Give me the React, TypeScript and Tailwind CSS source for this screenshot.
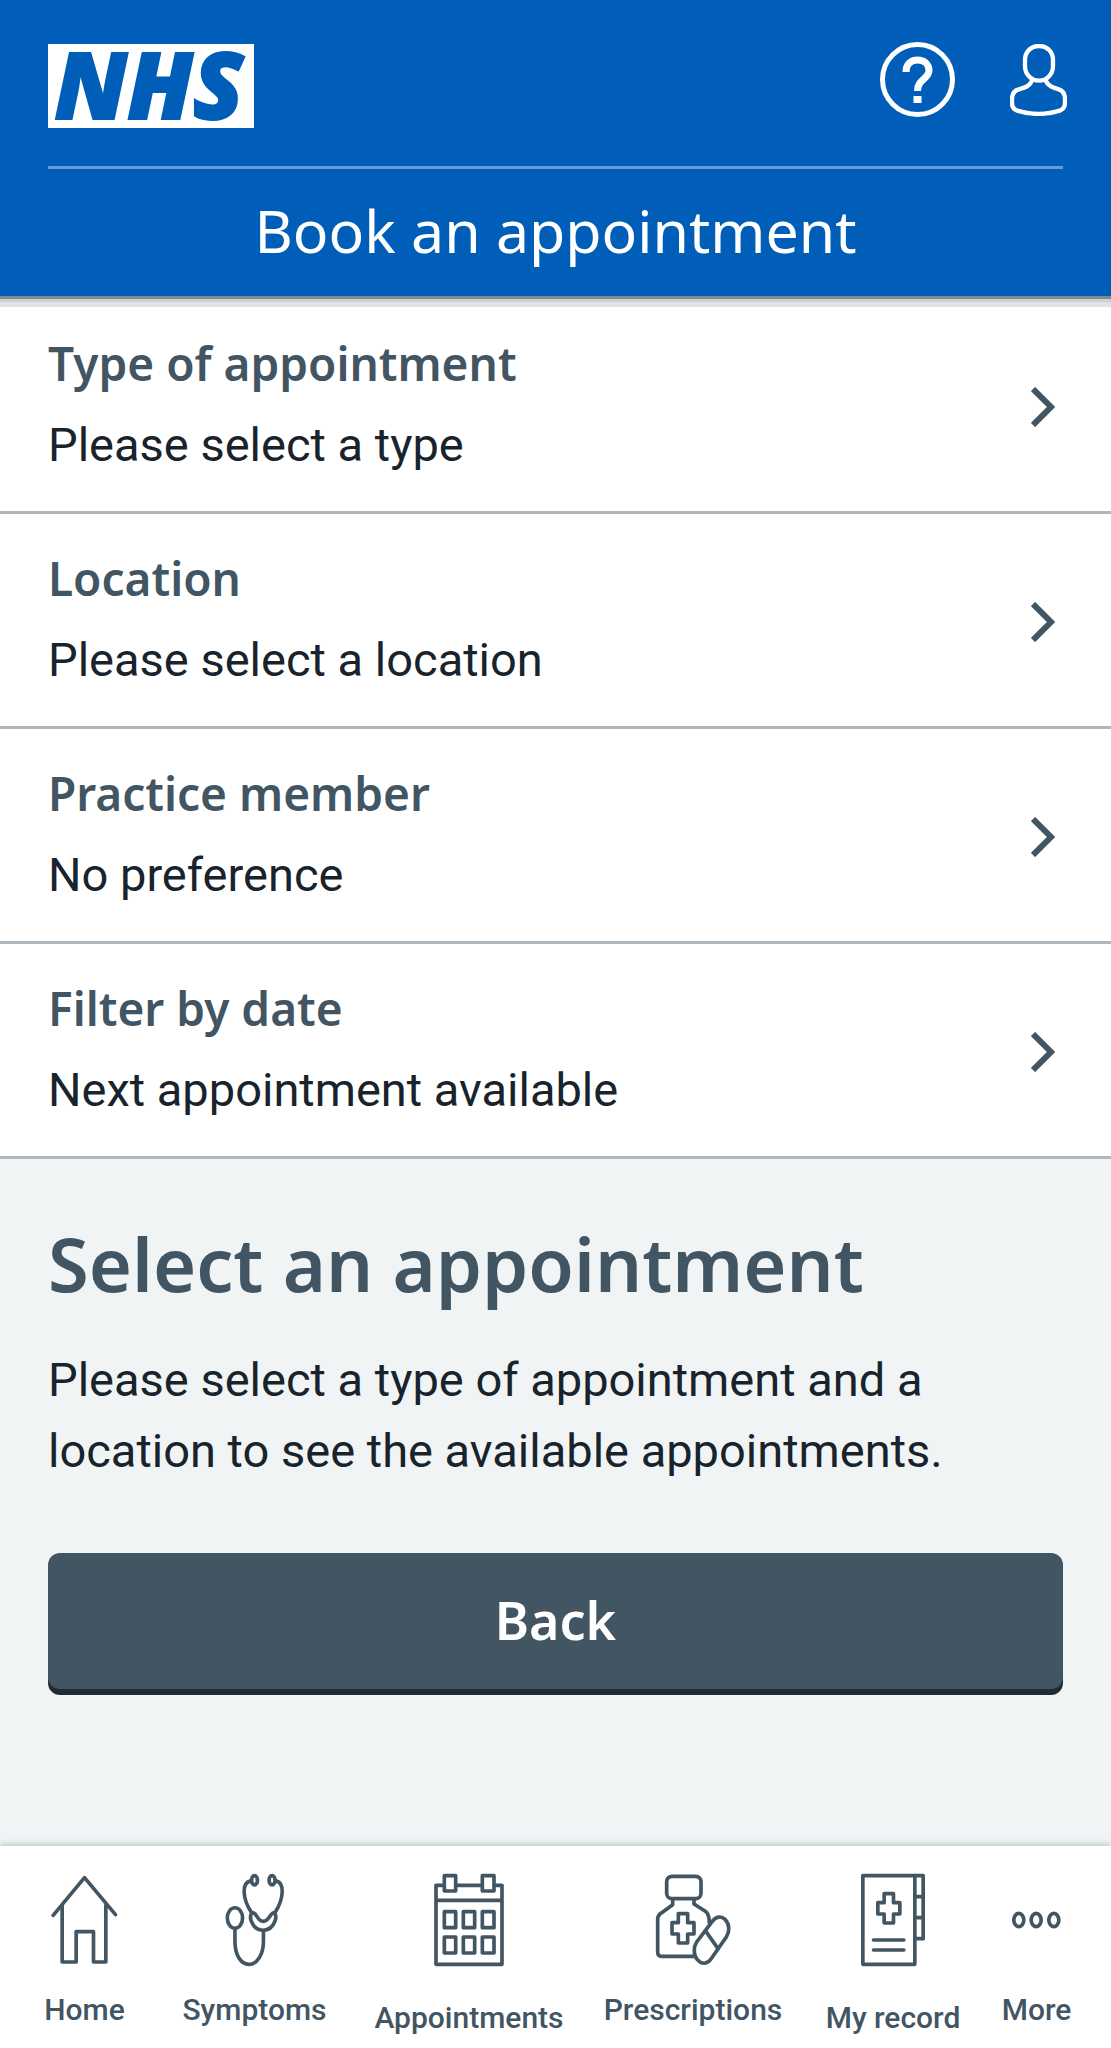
import type { ReactNode } from 'react';

type Filter = {
  label: string;
  value: string;
};

type NavItem = {
  label: string;
  viewBox: string;
  size: string;
  low?: boolean;
  icon: ReactNode;
};

const filters: Filter[] = [
  { label: 'Type of appointment', value: 'Please select a type' },
  { label: 'Location', value: 'Please select a location' },
  { label: 'Practice member', value: 'No preference' },
  { label: 'Filter by date', value: 'Next appointment available' },
];

const navItems: NavItem[] = [
  {
    label: 'Home',
    viewBox: '90 98 200 276',
    size: 'w-[67px]',
    icon: (
      <>
        <path d="M96 222L190 109L283 220" />
        <path d="M123 192V362H165V271H217V362H254V192" />
      </>
    ),
  },
  {
    label: 'Symptoms',
    viewBox: '615 98 178 276',
    size: 'w-[59px]',
    icon: (
      <>
        <ellipse cx="704" cy="116" rx="9" ry="14" />
        <ellipse cx="757" cy="116" rx="9" ry="14" />
        <path d="M692 118C664 124 668 172 694 212" />
        <path d="M769 118C796 124 792 172 767 212" />
        <path d="M702 215C692 212 690 228 694 239C701 258 715 267 730 267C746 267 759 257 766 239C771 226 767 212 759 215C750 220 747 240 730 240C714 240 712 219 702 215Z" />
        <ellipse cx="645" cy="230" rx="23" ry="31" />
        <path d="M645 263V300C645 340 662 370 687 370C712 370 731 340 731 300V270" />
      </>
    ),
  },
  {
    label: 'Appointments',
    viewBox: '250 98 208 276',
    size: 'w-[70px]',
    low: true,
    icon: (
      <>
        <path d="M276 132H255V369H453V132H434M318 132H390M255 177H453" />
        <path d="M280 103h34v46h-34zM394 103h35v46h-35z" />
        <path d="M280 211h34v48h-34zM337 211h34v48h-34zM394 211h35v48h-35z" />
        <path d="M280 287h34v48h-34zM337 287h34v48h-34zM394 287h35v48h-35z" />
      </>
    ),
  },
  {
    label: 'Prescriptions',
    viewBox: '198 98 225 276',
    size: 'w-[75px]',
    icon: (
      <>
        <rect x="230" y="105" width="103" height="67" rx="16" />
        <path d="M248 174V190L210 218Q203 224 203 234V333Q203 345 215 345H312" />
        <path d="M312 174V188L346 210Q358 218 358 245" />
        <path d="M265 217H293V244H312V278H293V305H265V278H246V244H265Z" />
        <path d="M320 302L367 240C378 225 394 223 405 234C420 250 419 272 409 287L363 353C352 369 335 370 322 355C310 341 310 317 320 302Z" />
        <path d="M346 268L384 322" />
      </>
    ),
  },
  {
    label: 'My record',
    viewBox: '150 98 191 276',
    size: 'w-[64px]',
    low: true,
    icon: (
      <>
        <path d="M155 103H311V369H155Z" />
        <path d="M311 103H336V292H311M311 166H336M311 229H336" />
        <path d="M219 157H247V184H266V218H247V245H219V218H200V184H219Z" />
        <path d="M187 296H278M187 326H278" />
      </>
    ),
  },
  {
    label: 'More',
    viewBox: '608 98 146 276',
    size: 'w-[49px]',
    icon: (
      <>
        <ellipse cx="628" cy="236" rx="15" ry="20" />
        <ellipse cx="680" cy="236" rx="15" ry="20" />
        <ellipse cx="733" cy="236" rx="15" ry="20" />
      </>
    ),
  },
];

function Logo() {
  return (
    <svg
      viewBox="0 0 206 84"
      className="mt-[2px] h-[84px] w-[206px] overflow-visible bg-white"
      role="img"
      aria-label="NHS"
    >
      <text
        x="101"
        y="75"
        textAnchor="middle"
        className="fill-[#005eb8] stroke-[#005eb8] stroke-2 font-['Open_Sans',sans-serif] text-[92px] font-extrabold italic"
      >
        NHS
      </text>
    </svg>
  );
}

function Header() {
  return (
    <header className="relative border-b-[3px] border-[#84898d] bg-[#005eb8] text-white shadow-[0_3px_0_#cdd1d2,0_8px_0_#dde3e4]">
      <div className="flex items-start justify-between pt-[42px] pr-11 pl-12">
        <a href="#home">
          <Logo />
        </a>
        <div className="flex items-start gap-[55px]">
          <button type="button" aria-label="Help">
            <svg
              viewBox="0 0 75 75"
              className="h-[75px] w-[75px] fill-none stroke-current"
            >
              <circle cx="37.5" cy="37.5" r="35" strokeWidth="5" />
              <path
                d="M26 30C26 22 31 18 37.500 18C44 18 49 22 49 28.500C49 37 37.500 37 37.500 49"
                strokeWidth="7"
              />
              <path d="M37.500 54V61" strokeWidth="8" />
            </svg>
          </button>
          <button type="button" aria-label="Account" className="pt-[2px]">
            <svg
              viewBox="510 72 171 216"
              className="h-[72px] w-[57px] fill-none stroke-current"
              strokeWidth="13"
              strokeLinejoin="round"
            >
              <path d="M597 78C572 78 555 96 555 120V138C555 163 574 182 597 182C620 182 639 163 639 138V120C639 96 622 78 597 78Z" />
              <path d="M577 180C568 202 552 203 536 208C522 212 516 224 516 238V249C516 262 521 268 532 272C571 285 621 285 659 272C669 268 675 262 675 249V238C675 224 669 212 656 208C640 203 625 200 616 180" />
            </svg>
          </button>
        </div>
      </div>
      <div className="mx-12 mt-[38px] border-t-[3px] border-[#669ed4]" />
      <h1 className="pt-[25px] pb-[30px] text-center font-['Noto_Sans',sans-serif] text-[59px] leading-[72px]">
        Book an appointment
      </h1>
    </header>
  );
}

function FilterRow({ label, value }: Filter) {
  return (
    <li className="border-b-[3px] border-[#aeb7bd] bg-white">
      <button
        type="button"
        className="flex w-full items-center justify-between pt-[29px] pr-14 pb-[26px] pl-12 text-left"
      >
        <span>
          <span className="block font-['Noto_Sans',sans-serif] text-[46px] leading-[70px] font-semibold text-[#425563]">
            {label}
          </span>
          <span className="mt-[7px] block text-[47px] leading-[80px]">
            {value}
          </span>
        </span>
        <svg
          viewBox="0 0 24 40"
          className="h-[40px] w-[24px] fill-none stroke-[#425563]"
          strokeWidth="6"
        >
          <path d="M2 2L20 20L2 38" />
        </svg>
      </button>
    </li>
  );
}

function BottomNav() {
  return (
    <nav className="relative bg-white text-[#425563] shadow-[0_-3px_5px_#c9d0d2]">
      <ul className="grid grid-cols-[169fr_171fr_258fr_190fr_210fr_77fr] pr-9">
        {navItems.map((item) => (
          <li key={item.label} className="flex justify-center">
            <a
              href="#nav"
              className="flex flex-col items-center pt-[28px] pb-[12px]"
            >
              <svg
                viewBox={item.viewBox}
                className={`${item.size} h-[92px] overflow-visible fill-none stroke-current`}
                strokeWidth="11"
                strokeLinecap="round"
                strokeLinejoin="round"
              >
                {item.icon}
              </svg>
              <span
                className={`${item.low ? 'pt-[34px]' : 'pt-[26px]'} text-[30px] leading-[36px] font-medium whitespace-nowrap`}
              >
                {item.label}
              </span>
            </a>
          </li>
        ))}
      </ul>
    </nav>
  );
}

export default function App() {
  return (
    <div className="flex min-h-screen flex-col bg-[#f0f4f5] font-['Roboto',sans-serif] text-[#18232c]">
      <Header />
      <main className="flex-1">
        <ul>
          {filters.map((filter) => (
            <FilterRow key={filter.label} {...filter} />
          ))}
        </ul>
        <section className="px-12 pt-[55px] pb-12">
          <h2 className="font-['Noto_Sans',sans-serif] text-[74px] leading-[100px] font-semibold text-[#425563]">
            Select an appointment
          </h2>
          <p className="pt-[30px] text-[47px] leading-[71px]">
            Please select a type of appointment and a location to see the
            available appointments.
          </p>
          <button
            type="button"
            className="mt-[67px] w-full rounded-xl bg-[#425563] pt-[31px] pb-[33px] font-['Noto_Sans',sans-serif] text-[52px] leading-[72px] font-semibold text-white shadow-[0_6px_0_#212b32]"
          >
            Back
          </button>
        </section>
      </main>
      <BottomNav />
    </div>
  );
}
